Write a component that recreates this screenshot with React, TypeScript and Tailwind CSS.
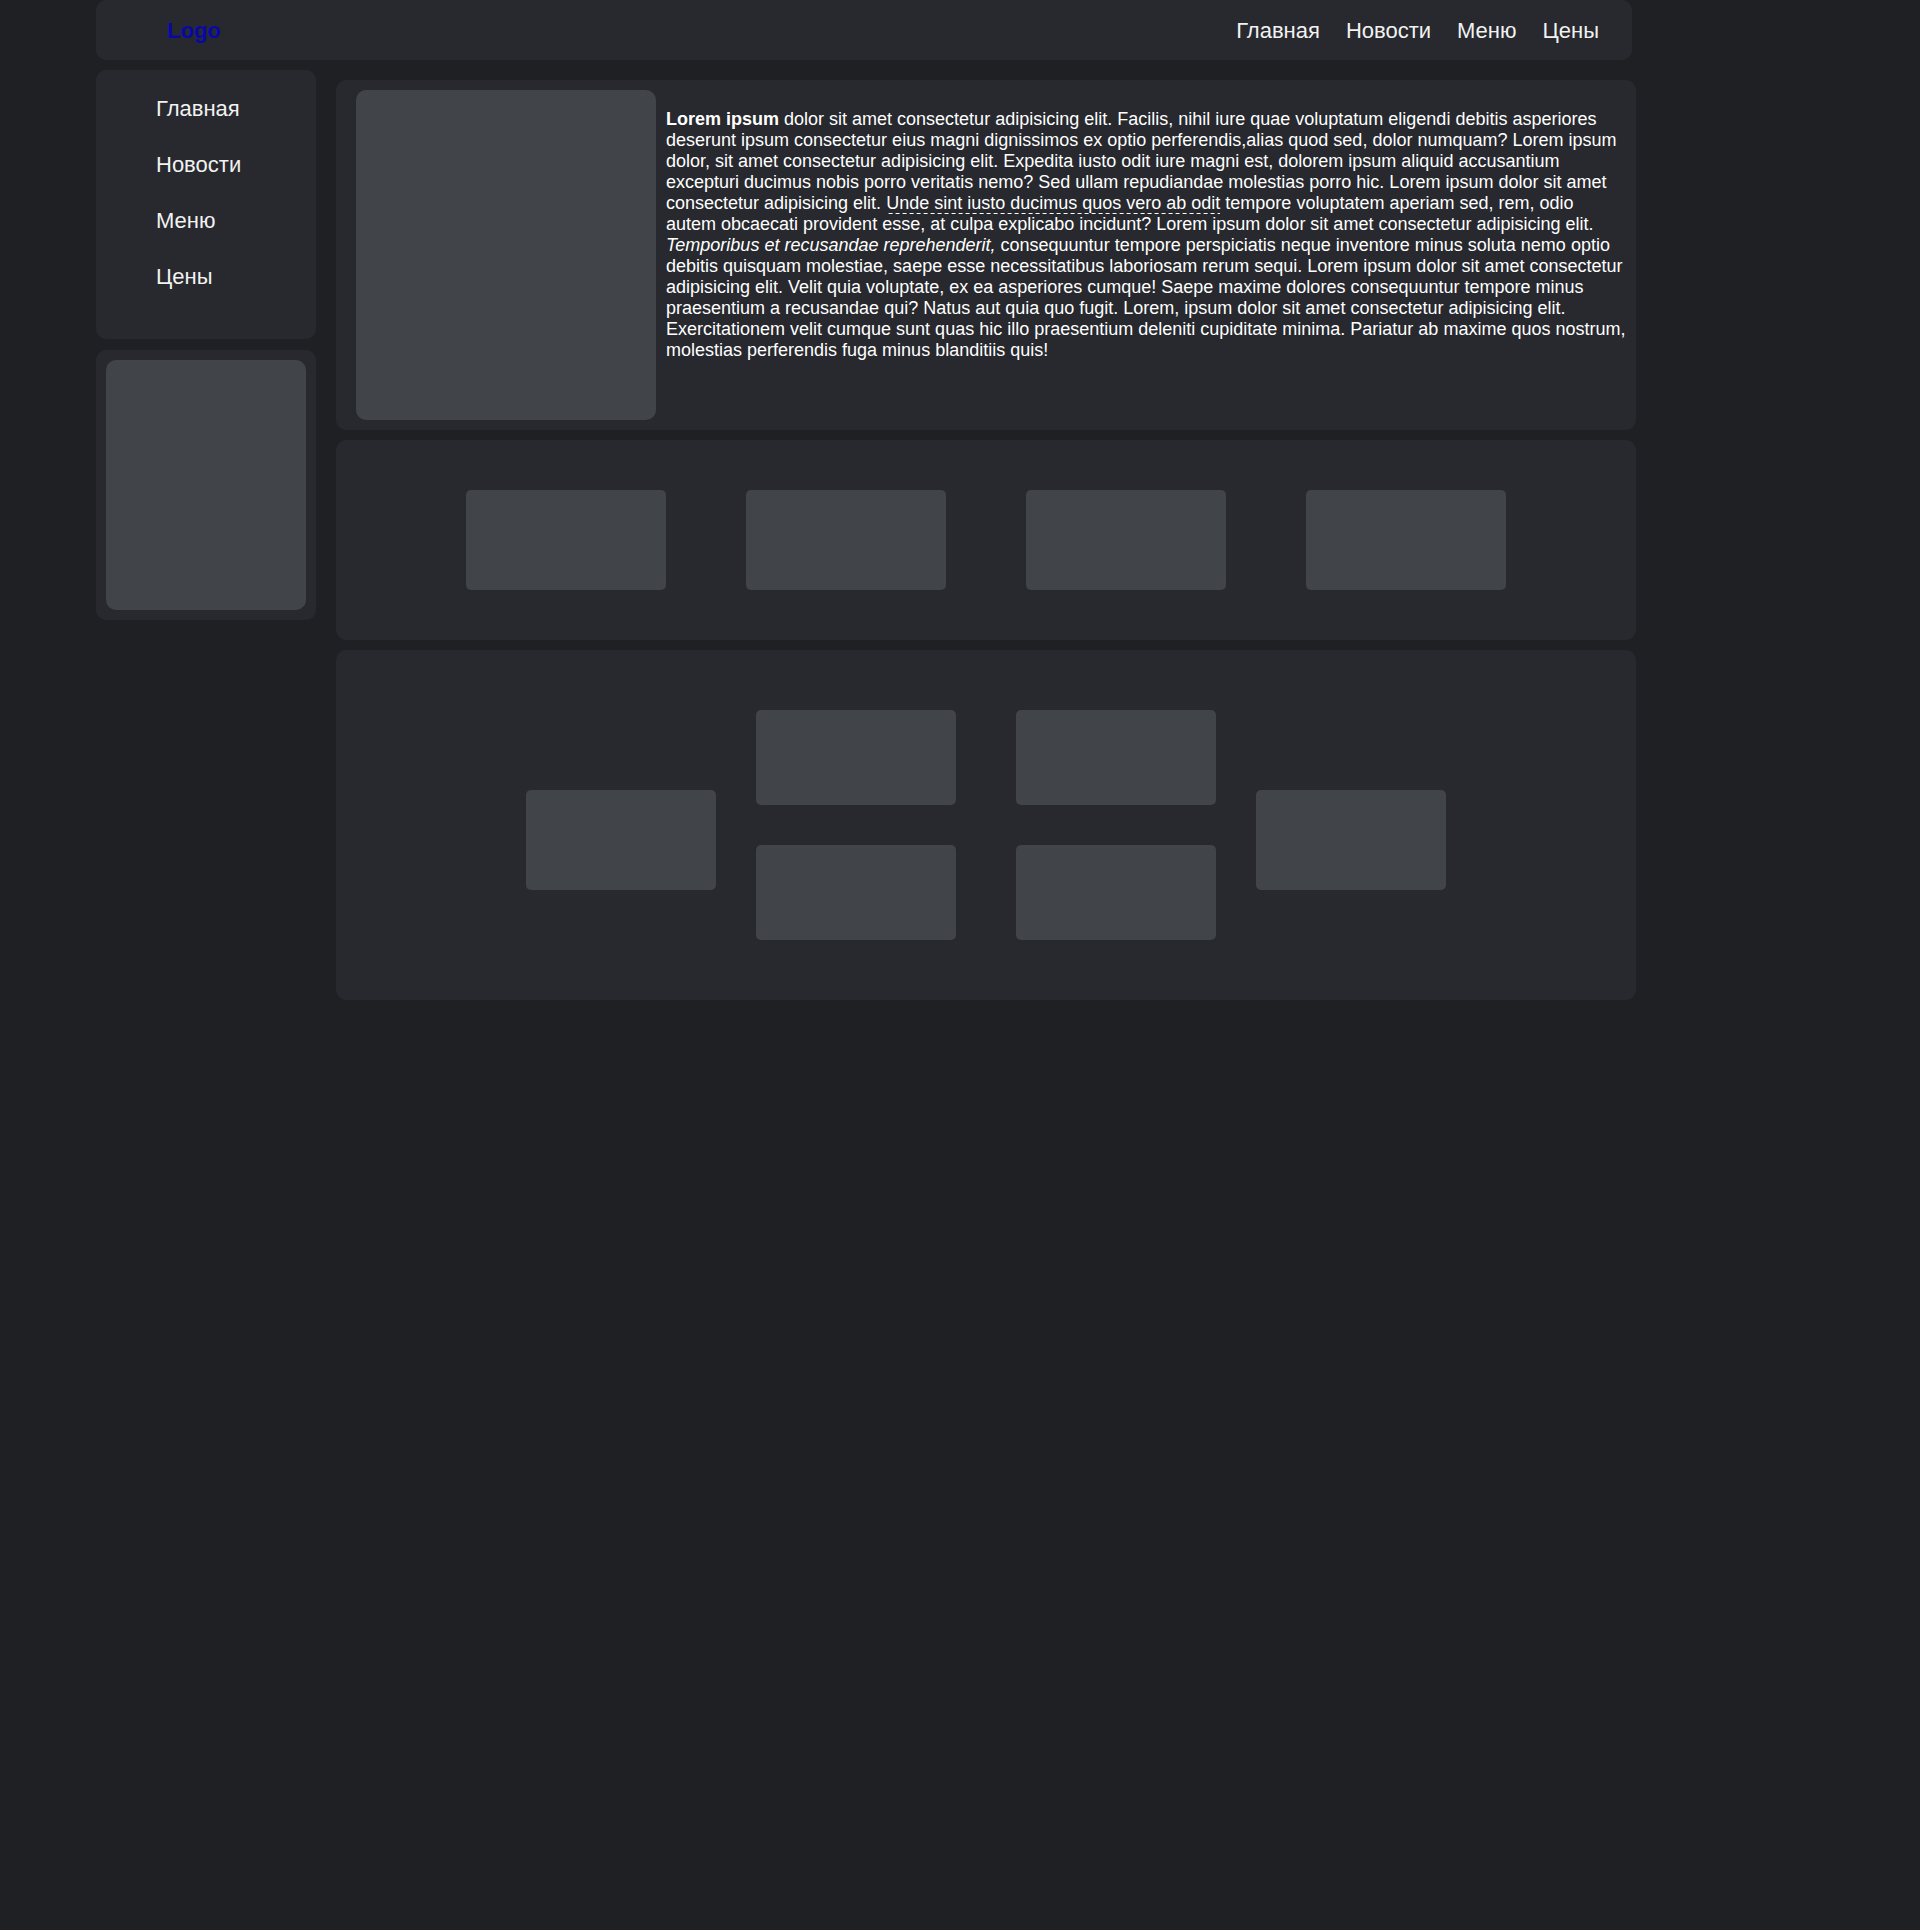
import React from "react";

const navItems = ["Главная", "Новости", "Меню", "Цены"];

export default function App() {
  return (
    <div
      className="min-h-[1930px] w-full bg-[#1e2023] pl-[96px] text-white"
      style={{ fontFamily: '"Liberation Sans", Arial, sans-serif' }}
    >
      <header className="flex h-[60px] w-[1536px] items-center justify-between rounded-[10px] bg-[#27292e] pl-[71px] pr-[33px]">
        <a className="text-[22px] font-bold text-[#0808a8]">Logo</a>
        <nav className="flex items-center gap-[26px] text-[22px] text-[#f2f2f2]">
          {navItems.map((n) => (
            <a key={n}>{n}</a>
          ))}
        </nav>
      </header>

      <div className="flex w-[1540px] items-start gap-[20px]">
        <aside className="mt-[10px] flex w-[220px] flex-col gap-[11px]">
          <ul className="flex flex-col gap-[31px] rounded-[10px] bg-[#27292e] pb-[50px] pl-[60px] pt-[26px] text-[22px] leading-[25px] text-[#f2f2f2]">
            {navItems.map((n) => (
              <li key={n}>{n}</li>
            ))}
          </ul>
          <div className="rounded-[10px] bg-[#27292e] p-[10px]">
            <div className="h-[250px] w-[200px] rounded-[10px] bg-[#414449]" />
          </div>
        </aside>

        <main className="mt-[20px] flex w-[1300px] flex-col gap-[10px]">
          <section className="flex rounded-[10px] bg-[#27292e] py-[10px] pl-[20px]">
            <div className="h-[330px] w-[300px] shrink-0 rounded-[10px] bg-[#414449]" />
            <p className="ml-[10px] mt-[19px] flex-1 pr-[10px] text-[18px] leading-[normal]">
              <b>Lorem ipsum</b> dolor sit amet consectetur adipisicing elit. Facilis, nihil iure quae
              voluptatum eligendi debitis asperiores deserunt ipsum consectetur eius magni dignissimos ex
              optio perferendis,alias quod sed, dolor numquam? Lorem ipsum dolor, sit amet consectetur
              adipisicing elit. Expedita iusto odit iure magni est, dolorem ipsum aliquid accusantium
              excepturi ducimus nobis porro veritatis nemo? Sed ullam repudiandae molestias porro hic. Lorem
              ipsum dolor sit amet consectetur adipisicing elit.{" "}
              <span className="bg-[linear-gradient(to_right,#ffffff_4px,transparent_4px)] bg-[length:7px_1px] bg-bottom bg-repeat-x pb-[1px]">
                Unde sint iusto ducimus quos vero ab odit
              </span>{" "}
              tempore voluptatem aperiam sed, rem, odio autem obcaecati provident esse, at culpa explicabo
              incidunt? Lorem ipsum dolor sit amet consectetur adipisicing elit.{" "}
              <i>Temporibus et recusandae reprehenderit,</i> consequuntur tempore perspiciatis neque
              inventore minus soluta nemo optio debitis quisquam molestiae, saepe esse necessitatibus
              laboriosam rerum sequi. Lorem ipsum dolor sit amet consectetur adipisicing elit. Velit quia
              voluptate, ex ea asperiores cumque! Saepe maxime dolores consequuntur tempore minus
              praesentium a recusandae qui? Natus aut quia quo fugit. Lorem, ipsum dolor sit amet
              consectetur adipisicing elit. Exercitationem velit cumque sunt quas hic illo praesentium
              deleniti cupiditate minima. Pariatur ab maxime quos nostrum, molestias perferendis fuga minus
              blanditiis quis!
            </p>
          </section>

          <section className="flex h-[200px] items-center justify-center gap-[80px] rounded-[10px] bg-[#27292e]">
            {[0, 1, 2, 3].map((i) => (
              <div key={i} className="h-[100px] w-[200px] rounded-[5px] bg-[#414449]" />
            ))}
          </section>

          <section className="flex h-[350px] items-center justify-center rounded-[10px] bg-[#27292e]">
            <div className="mt-[30px] h-[100px] w-[190px] rounded-[5px] bg-[#414449]" />
            <div className="mx-[40px] grid grid-cols-[200px_200px] grid-rows-[95px_95px] gap-x-[60px] gap-y-[40px]">
              {[0, 1, 2, 3].map((i) => (
                <div key={i} className="rounded-[5px] bg-[#414449]" />
              ))}
            </div>
            <div className="mt-[30px] h-[100px] w-[190px] rounded-[5px] bg-[#414449]" />
          </section>
        </main>
      </div>
    </div>
  );
}
